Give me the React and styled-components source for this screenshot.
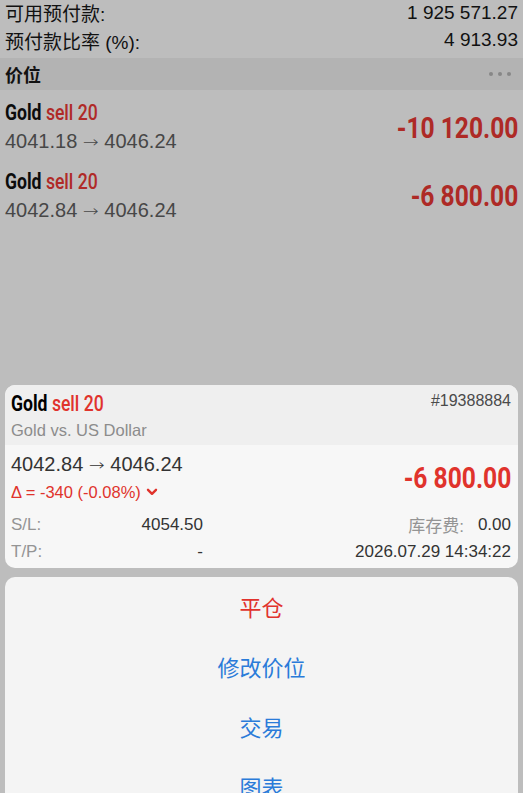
import React from "react";
import styled, { createGlobalStyle } from "styled-components";

const GlobalStyle = createGlobalStyle`
  html, body {
    margin: 0;
    padding: 0;
    background: #bdbdbd;
  }
  body {
    font-family: "Liberation Sans", "Noto Sans CJK SC", sans-serif;
    overflow: hidden;
  }
`;

const narrow = `"Roboto", "Liberation Sans", sans-serif`;

const positions = [
  { open: "4041.18", current: "4046.24", profit: "-10 120.00" },
  { open: "4042.84", current: "4046.24", profit: "-6 800.00" },
];

const actions = [
  { label: "平仓", danger: true },
  { label: "修改价位" },
  { label: "交易" },
  { label: "图表" },
];

const App = () => {
  return (
    <Screen>
      <GlobalStyle />
      <Backdrop>
        <Summary>
          <SummaryRow>
            <span>可用预付款:</span>
            <span>1 925 571.27</span>
          </SummaryRow>
          <SummaryRow>
            <span>预付款比率 (%):</span>
            <span>4 913.93</span>
          </SummaryRow>
        </Summary>
        <SectionBar>
          <SectionTitle>价位</SectionTitle>
          <Dots>
            <i />
            <i />
            <i />
          </Dots>
        </SectionBar>
        {positions.map((p, i) => (
          <PositionRow key={i}>
            <div>
              <Symbol>
                Gold <Side>sell 20</Side>
              </Symbol>
              <Prices>
                {p.open} <Arrow>→</Arrow> {p.current}
              </Prices>
            </div>
            <Profit>{p.profit}</Profit>
          </PositionRow>
        ))}
      </Backdrop>

      <Card>
        <CardHead>
          <HeadLine>
            <Symbol bright>
              Gold <Side bright>sell 20</Side>
            </Symbol>
            <Ticket>#19388884</Ticket>
          </HeadLine>
          <Description>Gold vs. US Dollar</Description>
        </CardHead>
        <CardBody>
          <PriceLine>
            <div>
              <Prices dark>
                4042.84 <Arrow>→</Arrow> 4046.24
              </Prices>
              <Delta>
                Δ = -340 (-0.08%)
                <svg width="12" height="8" viewBox="0 0 12 8">
                  <polyline
                    points="2,1.8 6,5.8 10,1.8"
                    fill="none"
                    stroke="#e0332c"
                    strokeWidth="2.4"
                    strokeLinecap="round"
                    strokeLinejoin="round"
                  />
                </svg>
              </Delta>
            </div>
            <Profit bright>-6 800.00</Profit>
          </PriceLine>
          <InfoGrid>
            <Label>S/L:</Label>
            <Value>4054.50</Value>
            <RightCell>
              <Label>库存费:</Label>
              <Value>0.00</Value>
            </RightCell>
            <Label>T/P:</Label>
            <Value>-</Value>
            <RightCell>
              <Value>2026.07.29 14:34:22</Value>
            </RightCell>
          </InfoGrid>
        </CardBody>
      </Card>

      <Sheet>
        {actions.map((a) => (
          <Action key={a.label} danger={a.danger}>
            {a.label}
          </Action>
        ))}
      </Sheet>
    </Screen>
  );
};

export default App;

const Screen = styled.div`
  width: 523px;
  height: 793px;
  overflow: hidden;
  background: #bdbdbd;
  display: flex;
  flex-direction: column;
`;

const Backdrop = styled.div`
  height: 385px;
  flex-shrink: 0;
`;

const Summary = styled.div`
  padding: 0 5px;
`;

const SummaryRow = styled.div`
  display: flex;
  justify-content: space-between;
  align-items: center;
  height: 28px;
  font-size: 19px;
  color: #111;
  &:first-child {
    height: 27px;
    margin-top: -1px;
  }
`;

const SectionBar = styled.div`
  margin-top: 4px;
  height: 32px;
  background: #b3b3b3;
  display: flex;
  align-items: center;
  justify-content: space-between;
  padding: 0 12px 0 5px;
`;

const SectionTitle = styled.div`
  font-size: 18px;
  font-weight: bold;
  color: #111;
`;

const Dots = styled.div`
  display: flex;
  gap: 5px;
  i {
    width: 4px;
    height: 4px;
    border-radius: 50%;
    background: #878787;
  }
`;

const PositionRow = styled.div`
  display: flex;
  justify-content: space-between;
  align-items: center;
  padding: 10px 5px 0 5px;
  height: 64px;
  box-sizing: border-box;
  & + & {
    height: 70px;
    padding-top: 13px;
  }
`;

const Symbol = styled.div`
  display: inline-block;
  font-family: ${narrow};
  font-weight: bold;
  font-size: 22px;
  line-height: 28px;
  color: ${(p) => (p.bright ? "#000" : "#0c0c0c")};
  transform: scaleX(0.8);
  transform-origin: left center;
  white-space: nowrap;
`;

const Side = styled.span`
  color: ${(p) => (p.bright ? "#e0332c" : "#b02a27")};
  font-weight: 500;
`;

const Prices = styled.div`
  font-size: 20px;
  line-height: 28px;
  color: ${(p) => (p.dark ? "#333" : "#474747")};
  white-space: nowrap;
`;

const Arrow = styled.span`
  font-family: "DejaVu Sans", sans-serif;
  font-weight: 200;
  font-size: 19px;
  display: inline-block;
  transform: scaleY(0.8);
`;

const Profit = styled.div`
  display: inline-block;
  font-family: ${narrow};
  font-weight: bold;
  font-size: 30px;
  color: ${(p) => (p.bright ? "#e0332c" : "#ae2a26")};
  transform: scaleX(0.82);
  transform-origin: right center;
  white-space: nowrap;
`;

const Card = styled.div`
  margin: 0 5px;
  border-radius: 10px;
  overflow: hidden;
  background: #f7f7f7;
  flex-shrink: 0;
`;

const CardHead = styled.div`
  background: #efefef;
  padding: 5px 7px 0 6px;
  height: 60px;
  box-sizing: border-box;
`;

const HeadLine = styled.div`
  display: flex;
  justify-content: space-between;
  align-items: flex-start;
`;

const Ticket = styled.div`
  font-size: 16px;
  color: #4a4a4a;
  margin-top: 2px;
`;

const Description = styled.div`
  font-size: 16.5px;
  line-height: 24px;
  color: #8c8c8c;
`;

const CardBody = styled.div`
  padding: 5px 7px 3px 6px;
`;

const PriceLine = styled.div`
  display: flex;
  justify-content: space-between;
  align-items: center;
`;

const Delta = styled.div`
  font-size: 16.5px;
  line-height: 26px;
  margin-top: 1px;
  color: #e0332c;
  display: flex;
  align-items: center;
  gap: 5px;
`;

const InfoGrid = styled.div`
  margin-top: 6px;
  display: grid;
  grid-template-columns: 60px 132px 1fr;
  grid-auto-rows: 27px;
  align-items: center;
`;

const Label = styled.span`
  font-size: 17px;
  color: #949494;
`;

const Value = styled.span`
  font-size: 17px;
  color: #333;
  text-align: right;
`;

const RightCell = styled.div`
  display: flex;
  justify-content: flex-end;
  align-items: center;
  gap: 14px;
`;

const Sheet = styled.div`
  margin: 9px 5px 0 5px;
  border-radius: 10px;
  background: #f4f4f4;
  padding-top: 9px;
  flex-shrink: 0;
`;

const Action = styled.div`
  height: 60px;
  display: flex;
  align-items: flex-start;
  justify-content: center;
  padding-top: 4px;
  box-sizing: border-box;
  font-family: "Noto Sans CJK SC", sans-serif;
  font-size: 22px;
  color: ${(p) => (p.danger ? "#e1332d" : "#2a7bd9")};
`;
